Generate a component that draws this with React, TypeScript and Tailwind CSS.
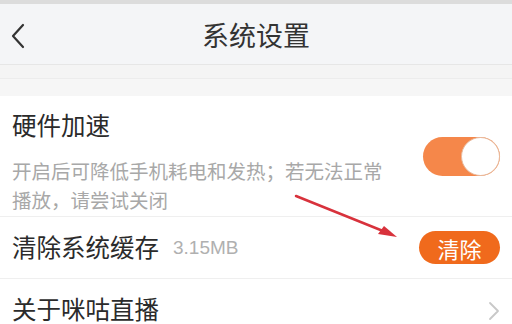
import React from 'react';

const font = { fontFamily: '"Noto Sans CJK SC", "Noto Sans", sans-serif' };

const ChevronLeft = () => (
  <svg width="16" height="26" viewBox="0 0 16 26" fill="none">
    <path d="M13 2L3 13l10 11" stroke="#333" strokeWidth="2.2" strokeLinecap="round" strokeLinejoin="round" />
  </svg>
);

const ChevronRight = () => (
  <svg width="12" height="20" viewBox="0 0 12 20" fill="none">
    <path d="M2 2l8 8-8 8" stroke="#c8c8c8" strokeWidth="1.8" strokeLinecap="round" strokeLinejoin="round" />
  </svg>
);

const Toggle = () => (
  <div className="flex h-[39px] w-[77px] items-center justify-end rounded-full bg-[#f5874a]">
    <div className="h-[39px] w-[39px] rounded-full border border-[#e8b99c] bg-white" />
  </div>
);

export default function App() {
  return (
    <div className="relative h-[324px] w-[512px] overflow-hidden bg-white" style={font}>
      <div className="h-[4px] bg-[#dcdcdc]" />
      {/* Header */}
      <div className="relative flex h-[61px] items-center justify-center border-b border-[#e6e6e6] bg-[#f4f5f7]">
        <div className="absolute left-[10px] top-[19px]">
          <ChevronLeft />
        </div>
        <span className="text-[27px] leading-none text-[#333]">系统设置</span>
      </div>
      {/* gap */}
      <div className="h-[14px] border-b border-[#ececec] bg-[#f4f4f4]" />
      <div className="h-[17px] bg-[#f6f6f6]" />

      {/* Hardware acceleration */}
      <div className="flex h-[121px] items-start justify-between border-b border-[#efefef] px-[12px]">
        <div className="flex flex-col">
          <div className="mt-[13px] text-[24.5px] leading-[32px] text-[#2b2b2b]">硬件加速</div>
          <div className="mt-[15px] w-[382px] text-[19.5px] leading-[29px] text-[#a8a8a8]">
            开启后可降低手机耗电和发热；若无法正常播放，请尝试关闭
          </div>
        </div>
        <div className="mt-[41px]">
          <Toggle />
        </div>
      </div>

      {/* Clear cache */}
      <div className="flex h-[62px] items-center justify-between border-b border-[#efefef] px-[12px]">
        <div className="flex items-center gap-[14px]">
          <span className="text-[24.5px] leading-none text-[#2b2b2b]">清除系统缓存</span>
          <span className="text-[19px] leading-none text-[#b0b0b0]" style={{ fontFamily: '"Liberation Sans", sans-serif' }}>
            3.15MB
          </span>
        </div>
        <div className="flex h-[33px] w-[81px] items-center justify-center rounded-full bg-[#f06a1c] text-[22px] leading-none text-white">
          清除
        </div>
      </div>

      {/* About */}
      <div className="flex h-[44px] items-end justify-between px-[12px]">
        <span className="text-[24.5px] leading-[28px] text-[#2b2b2b]">关于咪咕直播</span>
        <div className="mb-[2px]">
          <ChevronRight />
        </div>
      </div>

      {/* annotation arrow */}
      <svg className="pointer-events-none absolute left-0 top-0" width="512" height="324" viewBox="0 0 512 324">
        <line x1="296" y1="196" x2="388" y2="233" stroke="#d8323c" strokeWidth="2.5" strokeLinecap="round" />
        <path d="M397 237 L378 234 L384 226 Z" fill="#d8323c" />
      </svg>
    </div>
  );
}
